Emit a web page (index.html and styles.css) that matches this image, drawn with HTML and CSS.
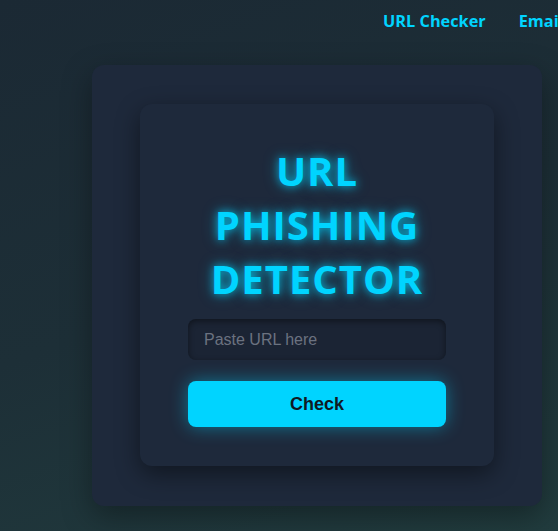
FILE: index.html
```html
<!DOCTYPE html>
<html lang="en">
<head>
<meta charset="utf-8">
<title>URL Phishing Detector</title>
<link rel="stylesheet" href="styles.css">
</head>
<body>
<div class="page">
  <nav class="nav">
    <a class="nav-link" href="#">URL Checker</a>
    <a class="nav-link" href="#">Email Checker</a>
  </nav>
  <main class="main">
    <section class="outer-card">
      <div class="inner-card">
        <h1 class="title">URL PHISHING DETECTOR</h1>
        <form class="form">
          <input class="url-input" type="text" placeholder="Paste URL here">
          <button class="check-btn" type="button">Check</button>
        </form>
      </div>
    </section>
  </main>
</div>
</body>
</html>
```
FILE: styles.css
```css
html, body {
  margin: 0;
  padding: 0;
  height: 100%;
}
body {
  background: linear-gradient(160deg, #1b2934 0%, #1d2f37 50%, #213c3e 100%);
  overflow: hidden;
  font-family: "Open Sans", "Liberation Sans", sans-serif;
}
.page {
  width: 634px;
}
.nav {
  display: flex;
  justify-content: flex-end;
  gap: 33px;
  padding: 10px 0 0 0;
  height: 55px;
  box-sizing: border-box;
}
.nav-link {
  color: #00d4ff;
  text-decoration: none;
  font-weight: 700;
  font-size: 16.3px;
  line-height: 22px;
}
.main {
  display: flex;
  justify-content: center;
  padding-top: 10px;
}
.outer-card {
  width: 450px;
  box-sizing: border-box;
  background: #1e293b;
  border-radius: 12px;
  padding: 39px 48px 40px;
  box-shadow: 0 10px 30px rgba(0, 0, 0, 0.35);
}
.inner-card {
  background: #1e293b;
  border-radius: 12px;
  padding: 40px 48px 39px;
  box-shadow: 0 8px 25px rgba(0, 0, 0, 0.45);
  display: flex;
  flex-direction: column;
  align-items: center;
}
.title {
  margin: 0 0 13px;
  color: #00d4ff;
  font-family: "Open Sans", sans-serif;
  font-weight: 700;
  font-size: 40px;
  line-height: 54px;
  text-align: center;
  letter-spacing: 1px;
  text-shadow: 0 0 8px rgba(0, 212, 255, 0.75), 0 0 16px rgba(0, 212, 255, 0.4);
}
.form {
  width: 258px;
  display: flex;
  flex-direction: column;
  gap: 21px;
}
.url-input {
  height: 41px;
  box-sizing: border-box;
  border: none;
  border-radius: 8px;
  background: #1b2434;
  box-shadow: inset 0 2px 6px rgba(0, 0, 0, 0.45);
  padding: 0 16px;
  font-family: "Liberation Sans", Arial, sans-serif;
  font-size: 16px;
  color: #e5e7eb;
  outline: none;
}
.url-input::placeholder {
  color: #6b7280;
}
.check-btn {
  height: 46px;
  border: none;
  border-radius: 8px;
  background: #00d4ff;
  color: #0f1a24;
  font-family: "Liberation Sans", Arial, sans-serif;
  font-weight: 700;
  font-size: 18px;
  box-shadow: 0 0 18px rgba(0, 212, 255, 0.45);
  cursor: pointer;
}
```
